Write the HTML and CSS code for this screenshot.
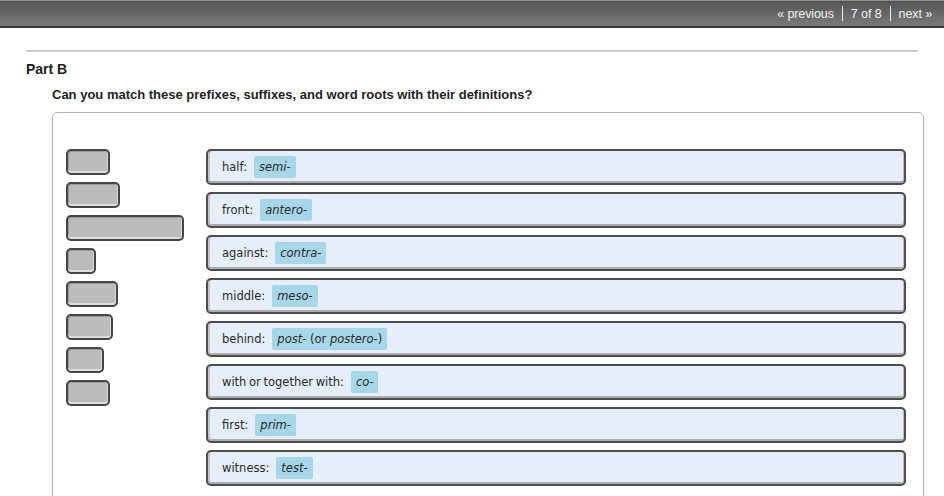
FILE: index.html
```html
<!DOCTYPE html>
<html>
<head>
<meta charset="utf-8">
<link rel="stylesheet" href="styles.css">
</head>
<body>
<div class="topbar">
  <nav class="pager">
    <span class="pg-link">« previous</span>
    <span class="pg-sep"></span>
    <span class="pg-count">7 of 8</span>
    <span class="pg-sep"></span>
    <span class="pg-link">next »</span>
  </nav>
</div>
<main class="content">
  <hr class="rule">
  <h2 class="part">Part B</h2>
  <p class="question">Can you match these prefixes, suffixes, and word roots with their definitions?</p>
  <section class="board">
    <div class="tiles">
      <div class="tile" style="width:44px"></div>
      <div class="tile" style="width:54px"></div>
      <div class="tile" style="width:118px"></div>
      <div class="tile" style="width:30px"></div>
      <div class="tile" style="width:52px"></div>
      <div class="tile" style="width:47px"></div>
      <div class="tile" style="width:38px"></div>
      <div class="tile" style="width:44px"></div>
    </div>
    <div class="targets">
      <div class="target"><span class="label">half:</span><span class="chip"><i>semi-</i></span></div>
      <div class="target"><span class="label">front:</span><span class="chip"><i>antero-</i></span></div>
      <div class="target"><span class="label">against:</span><span class="chip"><i>contra-</i></span></div>
      <div class="target"><span class="label">middle:</span><span class="chip"><i>meso-</i></span></div>
      <div class="target"><span class="label">behind:</span><span class="chip"><i>post-</i> (or <i>postero</i>-)</span></div>
      <div class="target"><span class="label">with or together with:</span><span class="chip"><i>co-</i></span></div>
      <div class="target"><span class="label">first:</span><span class="chip"><i>prim-</i></span></div>
      <div class="target"><span class="label">witness:</span><span class="chip"><i>test</i>-</span></div>
    </div>
  </section>
</main>
</body>
</html>
```

FILE: styles.css
```css
html, body {
  margin: 0;
  padding: 0;
  background: #fff;
}
body {
  font-family: "Liberation Sans", Arial, sans-serif;
  color: #222;
  overflow: hidden;
}
.topbar {
  height: 25px;
  border-top: 1px solid #8e8e8e;
  border-bottom: 2px solid #383838;
  background: linear-gradient(#545454, #7a7a7a);
  display: flex;
  justify-content: flex-end;
  align-items: center;
  padding-right: 12px;
}
.pager {
  display: flex;
  align-items: center;
  gap: 8px;
  font-size: 12.5px;
  color: #f2f2f2;
  letter-spacing: -0.1px;
}
.pg-sep {
  width: 1px;
  height: 15px;
  background: #e8e8e8;
}
.content {
  padding: 0 26px 0 26px;
}
.rule {
  margin: 22px 0 0 0;
  border: 0;
  height: 2px;
  background: #cfcfcf;
}
.part {
  margin: 9px 0 0 0;
  font-size: 14px;
  font-weight: bold;
  color: #1e1e1e;
}
.question {
  margin: 10px 0 0 26px;
  font-size: 13px;
  font-weight: bold;
  color: #232323;
}
.board {
  margin: 10px -6px 0 26px;
  border: 1px solid #b3b3b3;
  border-radius: 5px;
  padding: 36px 17px 20px 13px;
  display: flex;
  height: 400px;
}
.tiles {
  width: 140px;
  display: flex;
  flex-direction: column;
  gap: 7px;
  flex-shrink: 0;
}
.tile {
  height: 26px;
  box-sizing: border-box;
  border: 2px solid #464646;
  border-radius: 5px;
  background: #bcbcbc;
  box-shadow: inset 0 -2px 0 #dedede, inset -1px 0 0 #d8d8d8, inset 1px 1px 0 #9a9a9a;
}
.targets {
  flex: 1;
  display: flex;
  flex-direction: column;
  gap: 7px;
}
.target {
  height: 32px;
  border: 2px solid #4d4d4d;
  border-radius: 5px;
  background: #e6eefc;
  box-shadow: inset 0 -2px 0 #adadad, inset 2px 0 0 #c4c4c4, inset -1px 0 0 #bdbdbd;
  display: flex;
  align-items: center;
  padding-left: 14px;
  font-family: "DejaVu Sans", Verdana, sans-serif;
  font-size: 11.5px;
  color: #2a2a2a;
}
.label {
  margin-right: 7px;
  word-spacing: -1px;
}
.chip {
  background: #a6d6e8;
  border-radius: 2px;
  height: 22px;
  display: flex;
  align-items: center;
  padding: 0 5px;
  white-space: pre;
  margin-top: -1px;
}
.chip i {
  font-style: italic;
}
```
